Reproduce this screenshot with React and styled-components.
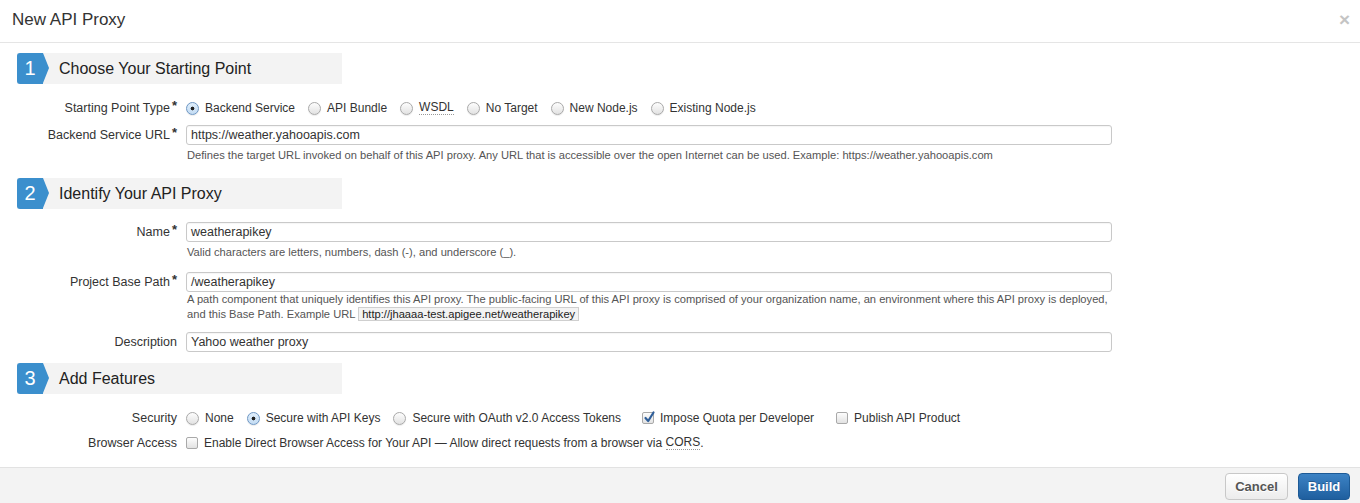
import React from "react";
import styled, { createGlobalStyle } from "styled-components";

const Global = createGlobalStyle`
  html, body { margin: 0; padding: 0; background: #fff; }
  body { font-family: "Liberation Sans", Arial, Helvetica, sans-serif; color: #333; }
`;

const Page = styled.div`
  width: 1360px;
  height: 503px;
  display: flex;
  flex-direction: column;
  background: #fff;
  overflow: hidden;
`;

const Header = styled.div`
  height: 42px;
  border-bottom: 1px solid #e5e5e5;
  display: flex;
  align-items: center;
  justify-content: space-between;
  padding: 0 10px 0 12px;
  flex-shrink: 0;
`;

const Title = styled.h1`
  margin: 0;
  font-size: 17px;
  font-weight: normal;
  color: #333;
  line-height: 20px;
  margin-top: -2px;
`;

const Close = styled.span`
  font-size: 19px;
  font-weight: bold;
  color: #c4c4c4;
  line-height: 20px;
  margin-top: -3px;
`;

const Body = styled.div`
  flex: 1;
  display: flex;
  flex-direction: column;
`;

const SectionBar = styled.div`
  margin: ${(p) => p.$mt}px 0 0 17px;
  width: 325px;
  height: 31px;
  background: #f3f3f3;
  display: flex;
  align-items: center;
  flex-shrink: 0;
`;

const Badge = styled.div`
  position: relative;
  width: 26px;
  height: 31px;
  background: #3b8fcd;
  border-radius: 3px 0 0 3px;
  color: #fff;
  font-size: 20px;
  line-height: 31px;
  text-align: center;
  margin-right: 16px;
  &::after {
    content: "";
    position: absolute;
    left: 26px;
    top: 0;
    border-left: 6px solid #3b8fcd;
    border-top: 15.5px solid transparent;
    border-bottom: 15.5px solid transparent;
  }
`;

const SectionTitle = styled.span`
  font-size: 16px;
  color: #222;
`;

const Row = styled.div`
  display: flex;
  align-items: ${(p) => (p.$top ? "flex-start" : "center")};
  margin-top: ${(p) => p.$mt}px;
  min-height: 20px;
  flex-shrink: 0;
`;

const Label = styled.label`
  width: 186px;
  height: 20px;
  flex-shrink: 0;
  text-align: right;
  padding-right: 9px;
  box-sizing: border-box;
  font-size: 12.5px;
  color: #333;
  line-height: 20px;
  white-space: nowrap;
`;

const Star = styled.span`
  font-size: 13px;
  font-weight: bold;
  line-height: 0;
  vertical-align: 2px;
  margin-left: 2px;
  color: #333;
`;

const Field = styled.div`
  display: flex;
  flex-direction: column;
  width: 926px;
`;

const Input = styled.div`
  height: 20px;
  box-sizing: border-box;
  border: 1px solid #c9c9c9;
  border-radius: 3px;
  padding: 0 4px;
  font-size: 12.5px;
  line-height: 18px;
  color: #333;
  box-shadow: inset 0 1px 1px rgba(0, 0, 0, 0.04);
`;

const Help = styled.div`
  font-size: 11.15px;
  color: #555;
  line-height: ${(p) => p.$lh || 14}px;
  margin-top: ${(p) => p.$mt}px;
  margin-left: 1px;
`;

const Code = styled.span`
  background: #f3f3f3;
  border: 1px solid #cfcfcf;
  padding: 0 3px;
  color: #222;
`;

const Options = styled.div`
  display: flex;
  align-items: center;
  height: 20px;
`;

const Option = styled.span`
  display: inline-flex;
  align-items: center;
  font-size: 12px;
  line-height: 20px;
  color: #333;
  margin-right: ${(p) => p.$mr ?? 13}px;
  white-space: nowrap;
`;

const RadioCircle = styled.span`
  width: 13px;
  height: 13px;
  box-sizing: border-box;
  border-radius: 50%;
  border: 1px solid ${(p) => (p.$on ? "#6e97c4" : "#a9a9a9")};
  background: ${(p) =>
    p.$on
      ? "radial-gradient(circle, #222 0 1.6px, transparent 2.2px), linear-gradient(#dfeefb, #c4dcf3)"
      : "linear-gradient(#fdfdfd, #e2e2e2)"};
  box-shadow: 0 1px 1px rgba(0, 0, 0, 0.08);
  margin-right: 6px;
  flex-shrink: 0;
`;

const Box = styled.span`
  width: 12px;
  height: 12px;
  box-sizing: border-box;
  border-radius: 2px;
  border: 1px solid #a9a9a9;
  background: linear-gradient(#fdfdfd, #e2e2e2);
  margin-right: 6px;
  position: relative;
  flex-shrink: 0;
  display: inline-block;
`;

const Check = styled.svg`
  position: absolute;
  left: 0px;
  top: -3px;
`;

const Abbr = styled.span`
  border-bottom: 1px dotted #999;
  line-height: 13px;
`;

const Footer = styled.div`
  margin-top: auto;
  height: 36px;
  border-top: 1px solid #e2e2e2;
  background: #f3f3f3;
  display: flex;
  justify-content: flex-end;
  align-items: flex-start;
  padding: 5px 10px 0 0;
  gap: 10px;
  box-sizing: border-box;
  flex-shrink: 0;
`;

const Button = styled.button`
  height: 27px;
  box-sizing: border-box;
  border-radius: 4px;
  font-family: "Liberation Sans", Arial, sans-serif;
  font-size: 13px;
  font-weight: bold;
  padding: 0;
  width: ${(p) => p.$w}px;
  border: 1px solid ${(p) => (p.$primary ? "#1d5a96" : "#c8c8c8")};
  color: ${(p) => (p.$primary ? "#fff" : "#555")};
  background: ${(p) =>
    p.$primary ? "linear-gradient(#3c82c4, #1f5f9f)" : "linear-gradient(#ffffff, #ececec)"};
  text-shadow: ${(p) => (p.$primary ? "0 -1px 0 rgba(0,0,0,0.25)" : "0 1px 0 #fff")};
`;

function Radio({ on, children, mr }) {
  return (
    <Option $mr={mr}>
      <RadioCircle $on={on} />
      {children}
    </Option>
  );
}

function CheckBox({ on, children, mr }) {
  return (
    <Option $mr={mr}>
      <Box>
        {on && (
          <Check width="13" height="14" viewBox="0 0 13 14">
            <path d="M2.5 8 L5.2 11 L10.5 2.5" fill="none" stroke="#2f5f9a" strokeWidth="2.2" strokeLinecap="round" strokeLinejoin="round" />
          </Check>
        )}
      </Box>
      {children}
    </Option>
  );
}

function Section({ n, title, mt }) {
  return (
    <SectionBar $mt={mt}>
      <Badge>{n}</Badge>
      <SectionTitle>{title}</SectionTitle>
    </SectionBar>
  );
}

export default function App() {
  return (
    <Page>
      <Global />
      <Header>
        <Title>New API Proxy</Title>
        <Close>×</Close>
      </Header>
      <Body>
        <Section n="1" title="Choose Your Starting Point" mt={10} />
        <Row $mt={14}>
          <Label>
            Starting Point Type<Star>*</Star>
          </Label>
          <Options>
            <Radio on>Backend Service</Radio>
            <Radio>API Bundle</Radio>
            <Radio>
              <Abbr>WSDL</Abbr>
            </Radio>
            <Radio>No Target</Radio>
            <Radio>New Node.js</Radio>
            <Radio>Existing Node.js</Radio>
          </Options>
        </Row>
        <Row $mt={7} $top>
          <Label>
            Backend Service URL<Star>*</Star>
          </Label>
          <Field>
            <Input>https://weather.yahooapis.com</Input>
            <Help $mt={3}>
              Defines the target URL invoked on behalf of this API proxy. Any URL that is accessible over the open Internet can be used. Example: https://weather.yahooapis.com
            </Help>
          </Field>
        </Row>

        <Section n="2" title="Identify Your API Proxy" mt={16} />
        <Row $mt={13} $top>
          <Label>
            Name<Star>*</Star>
          </Label>
          <Field>
            <Input>weatherapikey</Input>
            <Help $mt={3}>Valid characters are letters, numbers, dash (-), and underscore (_).</Help>
          </Field>
        </Row>
        <Row $mt={13} $top>
          <Label>
            Project Base Path<Star>*</Star>
          </Label>
          <Field>
            <Input>/weatherapikey</Input>
            <Help $mt={0} $lh={15}>
              A path component that uniquely identifies this API proxy. The public-facing URL of this API proxy is comprised of your organization name, an environment where this API proxy is deployed,
              <br />
              and this Base Path. Example URL <Code>http://jhaaaa-test.apigee.net/weatherapikey</Code>
            </Help>
          </Field>
        </Row>
        <Row $mt={10} $top>
          <Label>Description</Label>
          <Field>
            <Input>Yahoo weather proxy</Input>
          </Field>
        </Row>

        <Section n="3" title="Add Features" mt={11} />
        <Row $mt={14}>
          <Label>Security</Label>
          <Options>
            <Radio>None</Radio>
            <Radio on>Secure with API Keys</Radio>
            <Radio mr={21}>Secure with OAuth v2.0 Access Tokens</Radio>
            <CheckBox on mr={22}>Impose Quota per Developer</CheckBox>
            <CheckBox>Publish API Product</CheckBox>
          </Options>
        </Row>
        <Row $mt={5}>
          <Label>Browser Access</Label>
          <Options>
            <CheckBox>
              Enable Direct Browser Access for Your API — Allow direct requests from a browser via&nbsp;<Abbr>CORS</Abbr>.
            </CheckBox>
          </Options>
        </Row>
      </Body>
      <Footer>
        <Button $w={63}>Cancel</Button>
        <Button $w={52} $primary>
          Build
        </Button>
      </Footer>
    </Page>
  );
}
